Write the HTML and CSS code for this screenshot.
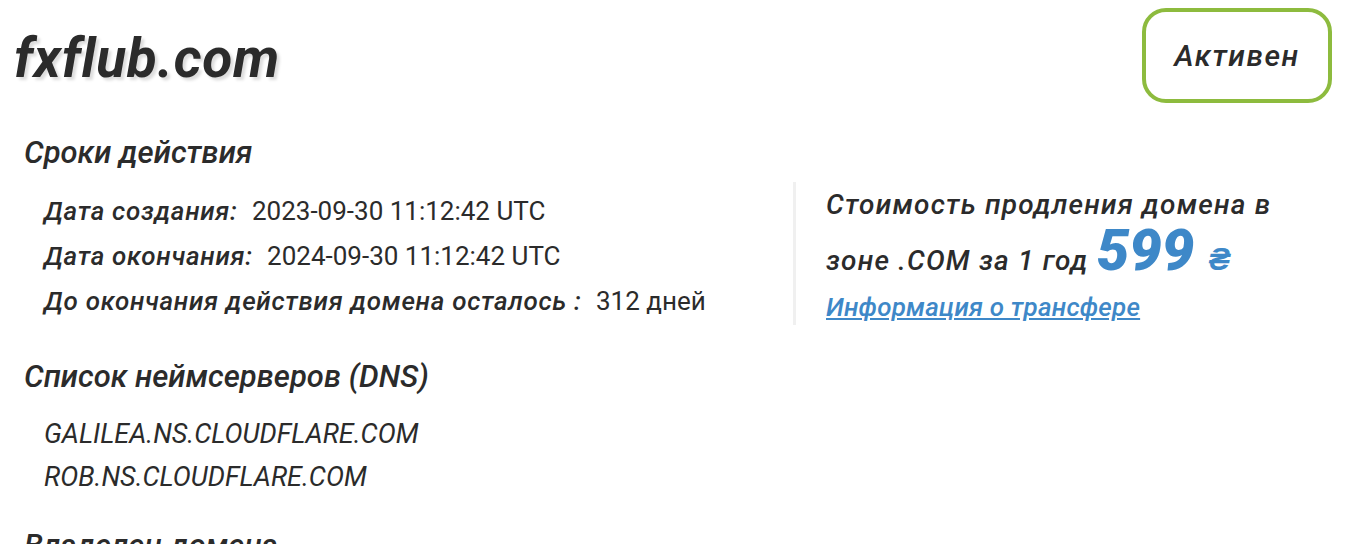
FILE: index.html
```html
<!DOCTYPE html>
<html lang="ru">
<head>
  <meta charset="UTF-8" />
  <title>fxflub.com</title>
  <link rel="stylesheet" href="styles.css">
</head>
<body>

<div class="page">
  <div class="top">
    <h1 class="domain">fxflub.com</h1>
    <div class="status">Активен</div>
  </div>

  <div class="info">
    <div class="left">
      <h2>Сроки действия</h2>
      <div class="rows">
        <div class="row"><span class="label">Дата создания:</span> <span class="value">2023-09-30 11:12:42 UTC</span></div>
        <div class="row"><span class="label">Дата окончания:</span> <span class="value">2024-09-30 11:12:42 UTC</span></div>
        <div class="row"><span class="label">До окончания действия домена осталось :</span> <span class="value">312 дней</span></div>
      </div>
    </div>

    <div class="right">
      <div class="price">
        Стоимость продления домена в зоне .COM за 1 год <span class="sum">599 <small>₴</small></span>
      </div>
      <a href="#" class="transfer">Информация о трансфере</a>
    </div>
  </div>

  <h2 class="dns-title">Список неймсерверов (DNS)</h2>
  <ul class="ns">
    <li>GALILEA.NS.CLOUDFLARE.COM</li>
    <li>ROB.NS.CLOUDFLARE.COM</li>
  </ul>

  <h2 class="owner">Владелец домена</h2>
</div>

</body>
</html>
```

FILE: styles.css
```css
body {
  font-family: Roboto, "Open Sans", sans-serif;
  background: #fff;
  color: #2b2b2b;
  margin: 0;
}

.page {
  padding: 8px 34px 0 14px;
}

.top {
  display: flex;
  justify-content: space-between;
  align-items: flex-start;
}

.domain {
  margin: 18px 0 0;
  font-size: 55px;
  font-style: italic;
  font-weight: 700;
  line-height: 64px;
  letter-spacing: 0.7px;
  text-shadow: 3px 3px 3px #ddd;
}

.status {
  width: 182px;
  height: 87px;
  border: 4px solid #8dbb3e;
  border-radius: 24px;
  display: flex;
  align-items: center;
  justify-content: center;
  font-size: 30px;
  font-style: italic;
  font-weight: 500;
  letter-spacing: 1.5px;
}

h2 {
  margin: 0;
  padding-left: 10px;
  font-size: 31px;
  font-style: italic;
  font-weight: 500;
  line-height: 40px;
}

.info {
  display: flex;
  margin-top: 30px;
}

.left {
  width: 779px;
  flex: none;
}

.rows {
  margin-top: 16px;
}

.row {
  padding-left: 30px;
  font-size: 26px;
  line-height: 45px;
  white-space: nowrap;
}

.label {
  font-style: italic;
  font-weight: 500;
  letter-spacing: 0.7px;
  margin-right: 8px;
}

.right {
  border-left: 3px solid #f0f0f0;
  padding-left: 30px;
  height: 143px;
  margin-top: 49px;
}

.price {
  font-size: 28px;
  font-style: italic;
  font-weight: 500;
  line-height: 51px;
  letter-spacing: 1.2px;
  max-width: 470px;
  margin-top: -3px;
}

.sum {
  color: #3e88c8;
  font-size: 58px;
  font-weight: 900;
  line-height: 40px;
  letter-spacing: 0;
}

.sum small {
  font-size: 32px;
}

.transfer {
  display: inline-block;
  color: #3e88c8;
  font-size: 26px;
  font-style: italic;
  font-weight: 500;
  line-height: 36px;
  letter-spacing: 0.2px;
  margin-top: 3px;
}

.dns-title {
  margin-top: 32px;
}

.ns {
  list-style: none;
  margin: 16px 0 0;
  padding-left: 30px;
}

.ns li {
  font-size: 27px;
  font-style: italic;
  line-height: 43px;
}

.owner {
  margin-top: 27px;
}
```
